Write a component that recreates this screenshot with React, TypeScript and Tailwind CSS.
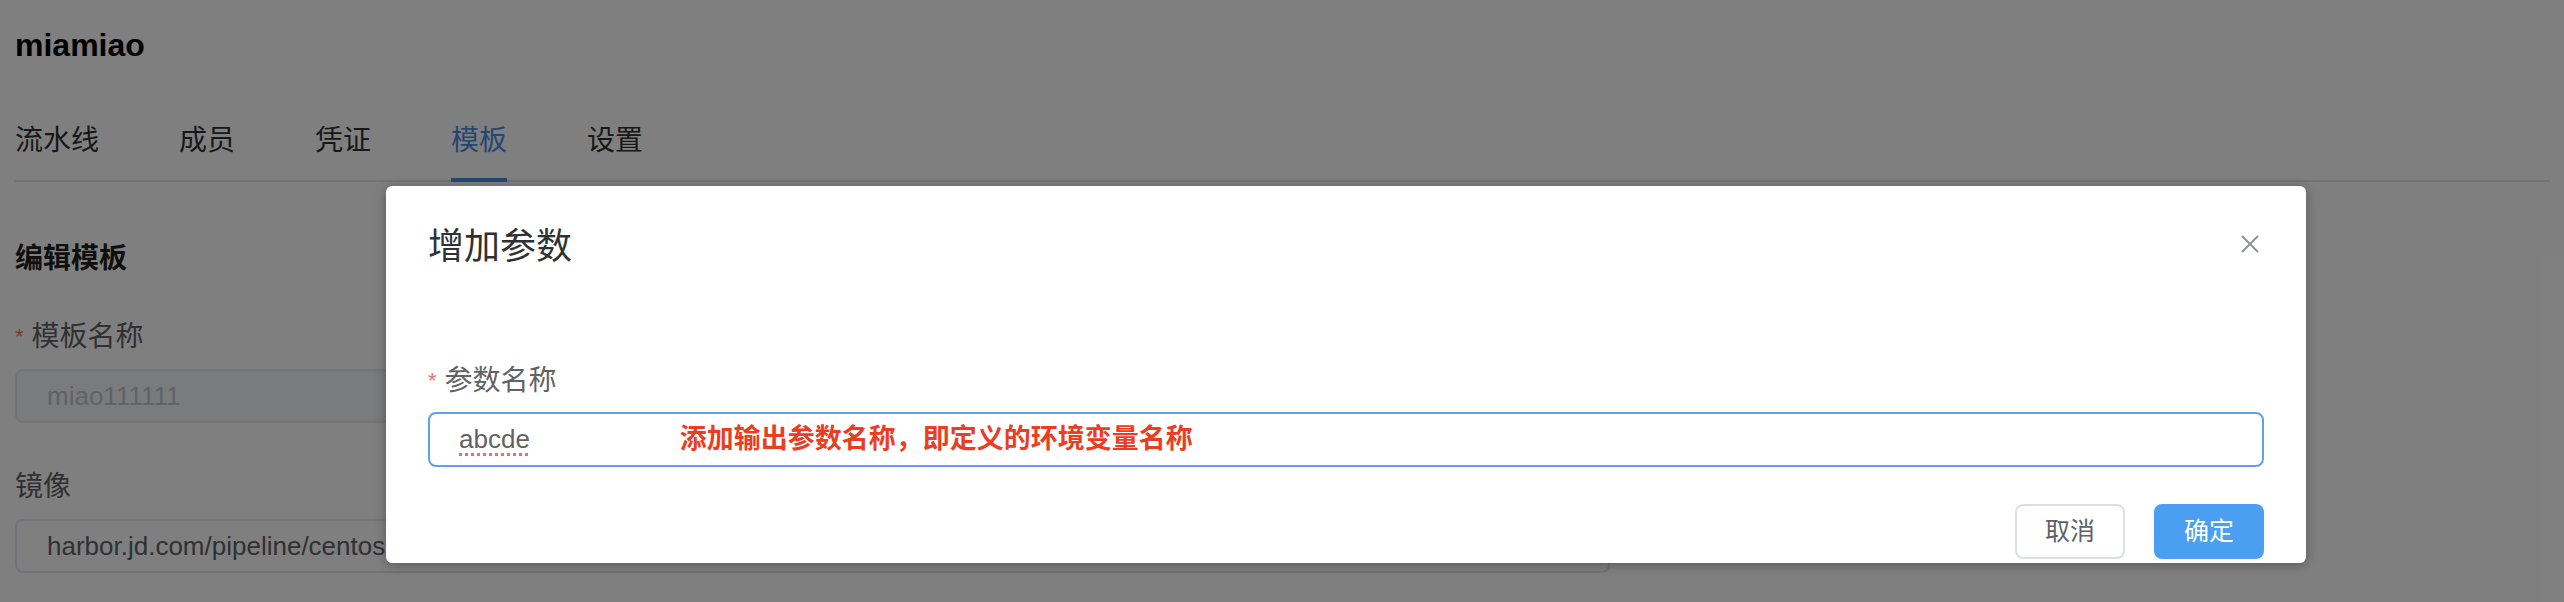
const font = "font-['Liberation_Sans','Noto_Sans_CJK_SC',sans-serif]";

const tabs = ["流水线", "成员", "凭证", "模板", "设置"];

function PageBehind() {
  return (
    <div className="pl-[15px] pt-[25px]">
      <h1 className="text-[32px] font-bold leading-[40px] text-black">miamiao</h1>

      <div className="mt-[58px] mr-[14px] flex gap-[80px] border-b-2 border-[#e4e7ed]">
        {tabs.map((t) => (
          <div
            key={t}
            className={
              t === "模板"
                ? "-mb-[2px] border-b-4 border-[#4a8fdf] pb-[19px] text-[28px] leading-[36px] text-[#4a8fdf]"
                : "-mb-[2px] border-b-4 border-transparent pb-[19px] text-[28px] leading-[36px] text-[#303133]"
            }
          >
            {t}
          </div>
        ))}
      </div>

      <h2 className="mt-[59px] text-[28px] font-bold leading-[36px] text-[#1f1f1f]">编辑模板</h2>

      <div className="mt-[42px] flex items-center text-[28px] leading-[36px] text-[#606266]">
        <span className="mr-[8px] text-[22px] text-[#f56c6c]">*</span>
        模板名称
      </div>
      <div className="mt-[14px] flex h-[54px] w-[1595px] items-center rounded-[8px] border-2 border-[#e4e7ed] bg-[#f5f7fa] pl-[30px] text-[26px] text-[#c0c4cc]">
        miao111111
      </div>

      <div className="mt-[46px] text-[28px] leading-[36px] text-[#606266]">镜像</div>
      <div className="mt-[14px] flex h-[54px] w-[1595px] items-center rounded-[8px] border-2 border-[#e4e7ed] bg-white pl-[30px] text-[26px] text-[#606266]">
        harbor.jd.com/pipeline/centos7.2:latest
      </div>
    </div>
  );
}

function AddParamDialog() {
  return (
    <div className="absolute left-[386px] top-[186px] h-[377px] w-[1920px] rounded-[6px] bg-white px-[42px] pt-[39px] shadow-[0_2px_12px_rgba(0,0,0,0.3)]">
      <div className="flex justify-between">
        <div className="text-[36px] leading-[44px] text-[#303133]">增加参数</div>
        <button className="mr-[4px] mt-[9px] self-start">
          <svg width="20" height="20" viewBox="0 0 20 20" fill="none">
            <path d="M2 2L18 18M18 2L2 18" stroke="#909399" strokeWidth="2" />
          </svg>
        </button>
      </div>

      <div className="mt-[94px] flex items-center text-[28px] leading-[36px] text-[#606266]">
        <span className="mr-[8px] text-[22px] text-[#f56c6c]">*</span>
        参数名称
      </div>

      <div className="mt-[13px] flex h-[55px] items-center rounded-[8px] border-2 border-[#5fa2ea] pl-[29px] text-[26px]">
        <span className="text-[#606266] underline decoration-red-400 decoration-dotted decoration-[3px] underline-offset-[5px]">
          abcde
        </span>
        <span className="ml-[150px] text-[27px] font-semibold text-[#eb3d1f]">
          添加输出参数名称，即定义的环境变量名称
        </span>
      </div>

      <div className="mt-[37px] flex justify-end gap-[29px]">
        <button className="h-[55px] w-[110px] rounded-[8px] border-2 border-[#dcdfe6] bg-white text-[25px] text-[#606266]">
          取消
        </button>
        <button className="h-[55px] w-[110px] rounded-[8px] bg-[#4a9ff2] text-[25px] text-white">
          确定
        </button>
      </div>
    </div>
  );
}

export default function App() {
  return (
    <div className={`relative h-[602px] w-[2564px] overflow-hidden bg-white ${font}`}>
      <PageBehind />
      <div className="absolute inset-0 bg-black/50" />
      <AddParamDialog />
    </div>
  );
}
